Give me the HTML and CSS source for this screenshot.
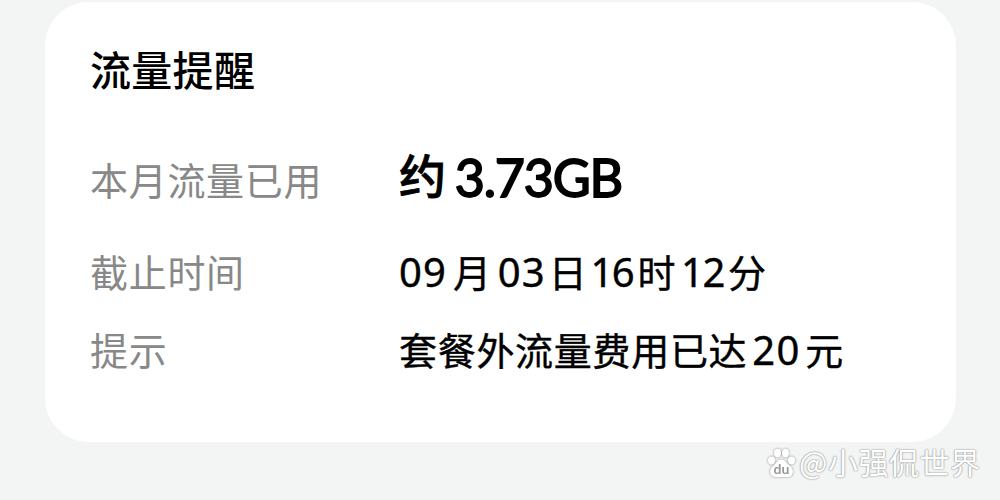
FILE: index.html
```
<!DOCTYPE html>
<html lang="zh-CN">
<head>
  <meta charset="UTF-8" />
  <meta name="viewport" content="width=device-width, initial-scale=1.0"/>
  <title>流量提醒</title>
  <link rel="stylesheet" href="styles.css">
</head>
<body>
  <div class="card">
    <h1>流量提醒</h1>
    <div class="row usage">
      <span class="label">本月流量已用</span>
      <span class="value"><span>约</span><span class="num">3.73GB</span></span>
    </div>
    <div class="row time">
      <span class="label">截止时间</span>
      <span class="value"><span class="num">09</span><span class="month">月</span><span class="num">03</span><span class="day">日</span><span class="num">16</span><span class="hour">时</span><span class="num">12</span><span>分</span></span>
    </div>
    <div class="row tip">
      <span class="label">提示</span>
      <span class="value"><span>套餐外流量费用已达</span><span class="num">20</span><span>元</span></span>
    </div>
  </div>

  <div class="watermark">
    <svg width="29" height="30" viewBox="0 0 29 30">
      <ellipse cx="4.500" cy="12.500" rx="3.500" ry="4"/>
      <ellipse cx="10.500" cy="5" rx="3.500" ry="4.200"/>
      <ellipse cx="18.500" cy="5" rx="3.500" ry="4.200"/>
      <ellipse cx="24.500" cy="12.500" rx="3.500" ry="4"/>
      <path d="M14.500 11.500c-4 0-5 3.500-8 6s-4 4.500-3 8 4 3.500 6 3.500h10c3 0 5 0 6-3.500s0-5.500-3-8-4-6-8-6z"/>
      <text x="6.500" y="26">du</text>
    </svg>
    <span>@小强侃世界</span>
  </div>
</body>
</html>
```
FILE: styles.css
```
* { box-sizing: border-box; }
body { margin: 0; height: 500px; overflow: hidden; background: #f3f5f4; font-family: "Noto Sans CJK SC", sans-serif; color: #000; }
.card { width: 911px; height: 440px; margin: 1.5px 0 0 45px; padding: 36px 45px; background: #fff; border-radius: 44px; }
h1 { margin: 0; font-size: 41px; line-height: 60px; font-weight: 500; letter-spacing: 0.3px; }
.row { display: flex; align-items: center; height: 60px; font-size: 38px; line-height: 60px; letter-spacing: 0.7px; white-space: nowrap; }
.usage { margin-top: 51px; }
.time { margin-top: 32px; }
.tip { margin-top: 18px; }
.label { width: 309px; color: #888; }
.value { display: flex; align-items: baseline; -webkit-text-stroke: 0.4px #000; }
.num { font-family: "Noto Sans", sans-serif; font-size: 40px; letter-spacing: 1.2px; }
.time .value { position: relative; top: 1px; }
.time .num { width: 54px; }
.month { margin-right: 6px; }
.time .month + .num { width: 51px; }
.day { margin-right: 3px; }
.time .day + .num, .time .hour + .num { width: 47px; letter-spacing: -1.5px; }
.hour { margin-right: 5px; }
.tip .value { position: relative; top: 1px; }
.tip .num { width: 52px; margin-left: 5px; margin-right: 1px; }
.usage .value { font-size: 47px; font-weight: 500; position: relative; top: -5px; -webkit-text-stroke: 0.8px #000; }
.usage .num { font-family: Lato, sans-serif; font-size: 52px; font-weight: 400; margin-left: 8px; letter-spacing: -1.2px; position: relative; top: 3px; -webkit-text-stroke: 1.8px #000; }
.watermark { position: absolute; left: 767px; top: 444px; display: flex; align-items: center; gap: 3px; height: 36px; font-size: 30px; line-height: 36px; letter-spacing: 0.5px; color: #fff; white-space: nowrap; text-shadow: 0 0 2px #888, 0 0 1px #999; }
.watermark span { margin-top: -3px; }
.watermark svg { fill: #fff; margin-top: 2px; filter: drop-shadow(0 0 1px #888); }
.watermark text { fill: #999; font: bold 14px Lato, sans-serif; letter-spacing: 0; text-shadow: none; }
```
